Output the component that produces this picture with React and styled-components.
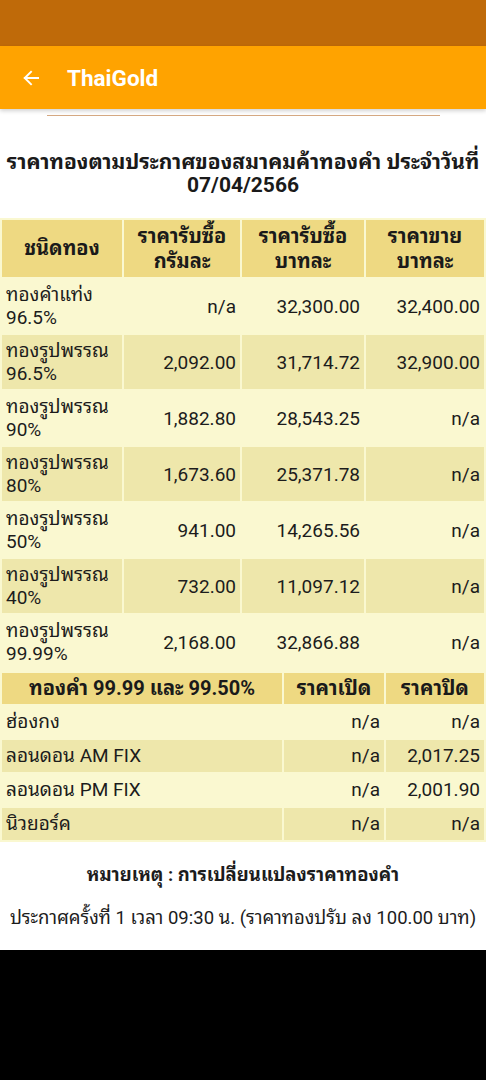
import React from "react";
import styled, { createGlobalStyle } from "styled-components";

const rows = [
  { name: ["ทองคำแท่ง", "96.5%"], gram: "n/a", buy: "32,300.00", sell: "32,400.00" },
  { name: ["ทองรูปพรรณ", "96.5%"], gram: "2,092.00", buy: "31,714.72", sell: "32,900.00" },
  { name: ["ทองรูปพรรณ", "90%"], gram: "1,882.80", buy: "28,543.25", sell: "n/a" },
  { name: ["ทองรูปพรรณ", "80%"], gram: "1,673.60", buy: "25,371.78", sell: "n/a" },
  { name: ["ทองรูปพรรณ", "50%"], gram: "941.00", buy: "14,265.56", sell: "n/a" },
  { name: ["ทองรูปพรรณ", "40%"], gram: "732.00", buy: "11,097.12", sell: "n/a" },
  { name: ["ทองรูปพรรณ", "99.99%"], gram: "2,168.00", buy: "32,866.88", sell: "n/a" },
];

const world = [
  { name: "ฮ่องกง", open: "n/a", close: "n/a" },
  { name: "ลอนดอน AM FIX", open: "n/a", close: "2,017.25" },
  { name: "ลอนดอน PM FIX", open: "n/a", close: "2,001.90" },
  { name: "นิวยอร์ค", open: "n/a", close: "n/a" },
];

const GlobalStyle = createGlobalStyle`
  html, body {
    margin: 0;
    padding: 0;
    background: #000;
    font-family: Roboto, "Noto Sans Thai Looped", "Noto Sans Thai UI", "Noto Sans Thai", "Noto Sans", sans-serif;
    color: #1c1c1c;
  }
`;

const BackArrow = () => (
  <svg width="20" height="20" viewBox="0 0 24 24" fill="none">
    <path
      d="M20.5 12H4.5M12 4.5L4.5 12 12 19.5"
      stroke="#fff"
      strokeWidth="2.3"
      strokeLinecap="square"
    />
  </svg>
);

const App = () => (
  <>
    <GlobalStyle />
    <Screen>
      <StatusBar />
      <AppBar>
        <BackButton>
          <BackArrow />
        </BackButton>
        <AppTitle>ThaiGold</AppTitle>
      </AppBar>
      <Content>
        <Rule />
        <Heading>
          ราคาทองตามประกาศของสมาคมค้าทองคำ ประจำวันที่
          <br />
          07/04/2566
        </Heading>
        <PriceTable>
          <colgroup>
            <col style={{ width: 120 }} />
            <col style={{ width: 116 }} />
            <col style={{ width: 122 }} />
            <col style={{ width: 118 }} />
          </colgroup>
          <thead>
            <tr>
              <Th $tall>ชนิดทอง</Th>
              <Th $tall>
                ราคารับซื้อ
                <br />
                กรัมละ
              </Th>
              <Th $tall>
                ราคารับซื้อ
                <br />
                บาทละ
              </Th>
              <Th $tall>
                ราคาขาย
                <br />
                บาทละ
              </Th>
            </tr>
          </thead>
          <tbody>
            {rows.map((r, i) => (
              <Tr key={i} $alt={i % 2 === 1}>
                <Td $tall>
                  {r.name[0]}
                  <br />
                  {r.name[1]}
                </Td>
                <Td $tall $num>{r.gram}</Td>
                <Td $tall $num>{r.buy}</Td>
                <Td $tall $num>{r.sell}</Td>
              </Tr>
            ))}
          </tbody>
        </PriceTable>
        <PriceTable>
          <colgroup>
            <col style={{ width: 280 }} />
            <col style={{ width: 100 }} />
            <col style={{ width: 98 }} />
          </colgroup>
          <thead>
            <tr>
              <Th>ทองคำ 99.99 และ 99.50%</Th>
              <Th>ราคาเปิด</Th>
              <Th>ราคาปิด</Th>
            </tr>
          </thead>
          <tbody>
            {world.map((r, i) => (
              <Tr key={i} $alt={i % 2 === 1}>
                <Td>{r.name}</Td>
                <Td $num>{r.open}</Td>
                <Td $num>{r.close}</Td>
              </Tr>
            ))}
          </tbody>
        </PriceTable>
        <NoteTitle>หมายเหตุ : การเปลี่ยนแปลงราคาทองคำ</NoteTitle>
        <NoteText>
          ประกาศครั้งที่ 1 เวลา 09:30 น. (ราคาทองปรับ ลง 100.00 บาท)
        </NoteText>
      </Content>
    </Screen>
  </>
);

const Screen = styled.div`
  width: 486px;
  display: flex;
  flex-direction: column;
`;

const StatusBar = styled.div`
  height: 46px;
  background: #bf6a09;
`;

const AppBar = styled.header`
  height: 63px;
  background: #ffa300;
  display: flex;
  align-items: center;
  padding-left: 21px;
  gap: 26px;
  box-shadow: 0 2px 4px rgba(0, 0, 0, 0.18);
  position: relative;
  z-index: 1;
`;

const BackButton = styled.div`
  display: flex;
  align-items: center;
`;

const AppTitle = styled.h1`
  margin: 0;
  color: #fff;
  font-family: Roboto, sans-serif;
  font-weight: 700;
  font-size: 22.5px;
`;

const Content = styled.main`
  height: 841px;
  background: #fff;
  display: flex;
  flex-direction: column;
  overflow: hidden;
`;

const Rule = styled.div`
  margin: 6px 46px 0 47px;
  border-top: 1px solid #d5a882;
`;

const Heading = styled.h2`
  margin: 35px 0 21px;
  font-size: 21px;
  line-height: 23px;
  font-weight: 700;
  text-align: center;
  color: #1a1a1a;
`;

const PriceTable = styled.table`
  width: 486px;
  table-layout: fixed;
  border-collapse: separate;
  border-spacing: 2px;
  background: #faf8d0;
`;

const Th = styled.th`
  background: #eed982;
  font-size: 20px;
  font-weight: 700;
  line-height: 25px;
  padding: ${(p) => (p.$tall ? "3.5px 4px" : "3px 4px")};
  text-align: center;
  vertical-align: middle;
  color: #1a1a1a;
`;

const Tr = styled.tr`
  background: ${(p) => (p.$alt ? "#eee7ab" : "#faf8d0")};
`;

const Td = styled.td`
  font-size: 19px;
  line-height: 23px;
  padding: ${(p) => (p.$tall ? "4px 4px" : "4px 4px 5px")};
  text-align: ${(p) => (p.$num ? "right" : "left")};
  vertical-align: middle;
  white-space: nowrap;
  color: #1c1c1c;
`;

const NoteTitle = styled.p`
  margin: 22px 0 0;
  text-align: center;
  font-size: 18.5px;
  line-height: 23px;
  font-weight: 700;
`;

const NoteText = styled.p`
  margin: 20px 0 0;
  text-align: center;
  font-size: 18.5px;
  line-height: 23px;
`;

export default App;
